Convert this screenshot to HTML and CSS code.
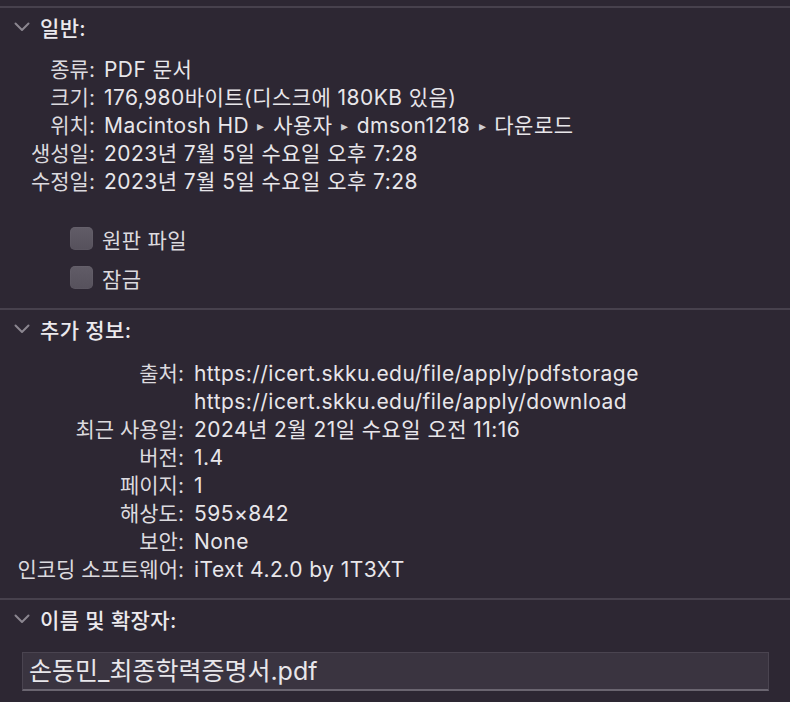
FILE: index.html
```html
<!DOCTYPE html>
<html lang="ko">
<head>
<meta charset="utf-8">
<link rel="stylesheet" href="styles.css">
</head>
<body>
<div class="panel">
  <div class="sep"></div>
  <section class="section">
    <div class="header">
      <svg class="chev" width="16" height="10" viewBox="0 0 16 10"><path d="M1.5 1.5 L8 8 L14.5 1.5" fill="none" stroke="#8b8690" stroke-width="2" stroke-linecap="round" stroke-linejoin="round"/></svg>
      <span class="htitle">일반:</span>
    </div>
    <div class="grid g1">
      <div class="lab">종류:</div><div class="val">PDF 문서</div>
      <div class="lab">크기:</div><div class="val">176,980바이트(디스크에 180KB 있음)</div>
      <div class="lab">위치:</div><div class="val">Macintosh HD <span class="tri">▸</span> 사용자 <span class="tri">▸</span> dmson1218 <span class="tri">▸</span> 다운로드</div>
      <div class="lab">생성일:</div><div class="val">2023년 7월 5일 수요일 오후 7:28</div>
      <div class="lab">수정일:</div><div class="val">2023년 7월 5일 수요일 오후 7:28</div>
    </div>
    <div class="checks">
      <label class="check"><span class="box"></span><span>원판 파일</span></label>
      <label class="check"><span class="box"></span><span>잠금</span></label>
    </div>
  </section>
  <div class="sep s2"></div>
  <section class="section">
    <div class="header">
      <svg class="chev" width="16" height="10" viewBox="0 0 16 10"><path d="M1.5 1.5 L8 8 L14.5 1.5" fill="none" stroke="#8b8690" stroke-width="2" stroke-linecap="round" stroke-linejoin="round"/></svg>
      <span class="htitle">추가 정보:</span>
    </div>
    <div class="grid g2">
      <div class="lab">출처:</div><div class="val">https://icert.skku.edu/file/apply/pdfstorage</div>
      <div class="lab"></div><div class="val">https://icert.skku.edu/file/apply/download</div>
      <div class="lab">최근 사용일:</div><div class="val">2024년 2월 21일 수요일 오전 11:16</div>
      <div class="lab">버전:</div><div class="val">1.4</div>
      <div class="lab">페이지:</div><div class="val">1</div>
      <div class="lab">해상도:</div><div class="val">595×842</div>
      <div class="lab">보안:</div><div class="val">None</div>
      <div class="lab">인코딩 소프트웨어:</div><div class="val">iText 4.2.0 by 1T3XT</div>
    </div>
  </section>
  <div class="sep s3"></div>
  <section class="section">
    <div class="header">
      <svg class="chev" width="16" height="10" viewBox="0 0 16 10"><path d="M1.5 1.5 L8 8 L14.5 1.5" fill="none" stroke="#8b8690" stroke-width="2" stroke-linecap="round" stroke-linejoin="round"/></svg>
      <span class="htitle">이름 및 확장자:</span>
    </div>
    <div class="field">손동민_최종학력증명서.pdf</div>
  </section>
</div>
</body>
</html>
```

FILE: styles.css
```css
html, body {
  margin: 0;
  padding: 0;
  background: #2d2733;
}
body {
  width: 790px;
  height: 702px;
  overflow: hidden;
  font-family: Inter, "Noto Sans CJK KR", sans-serif;
  font-size: 21px;
  letter-spacing: 0.35px;
  color: #e4e2e6;
}
.panel {
  padding-top: 6px;
}
.sep {
  height: 2px;
  background: #47414d;
}
.s2 { margin-top: 11px; }
.s3 { margin-top: 14px; }
.header {
  height: 38px;
  display: flex;
  align-items: center;
  padding-left: 14px;
  gap: 10px;
}
.chev { flex: none; }
.htitle {
  color: #ebe9ed;
  font-weight: 500;
}
.grid {
  display: grid;
  row-gap: 0;
  margin-top: 10px;
}
.g1 { grid-template-columns: 95px 1fr; column-gap: 9px; }
.g2 { grid-template-columns: 184px 1fr; column-gap: 10px; margin-top: 12px; }
.lab, .val {
  height: 28px;
  line-height: 28px;
  white-space: nowrap;
}
.lab {
  text-align: right;
  color: #dcdadf;
  letter-spacing: 0;
}
.val {
  color: #e8e6ea;
  letter-spacing: 0.45px;
}
.tri {
  font-size: 14px;
  color: #cfcdd2;
  vertical-align: 2px;
  margin: 0 2px;
}
.checks {
  margin-top: 23px;
  padding-left: 70px;
  display: flex;
  flex-direction: column;
}
.check {
  height: 39px;
  display: flex;
  align-items: center;
  gap: 9px;
  color: #dcdadf;
}
.box {
  width: 23px;
  height: 23px;
  border-radius: 5px;
  background: linear-gradient(#615c67, #56515c);
  box-shadow: inset 0 0 0 0.5px rgba(255,255,255,0.06);
}
.field {
  margin: 14px 21px 0 22px;
  height: 36px;
  line-height: 36px;
  padding-left: 6px;
  background: #3a3440;
  border: 1px solid #4a4450;
  border-bottom: 2px solid #6a6570;
  font-size: 25px;
  letter-spacing: 0;
  color: #e8e6ea;
}
```
